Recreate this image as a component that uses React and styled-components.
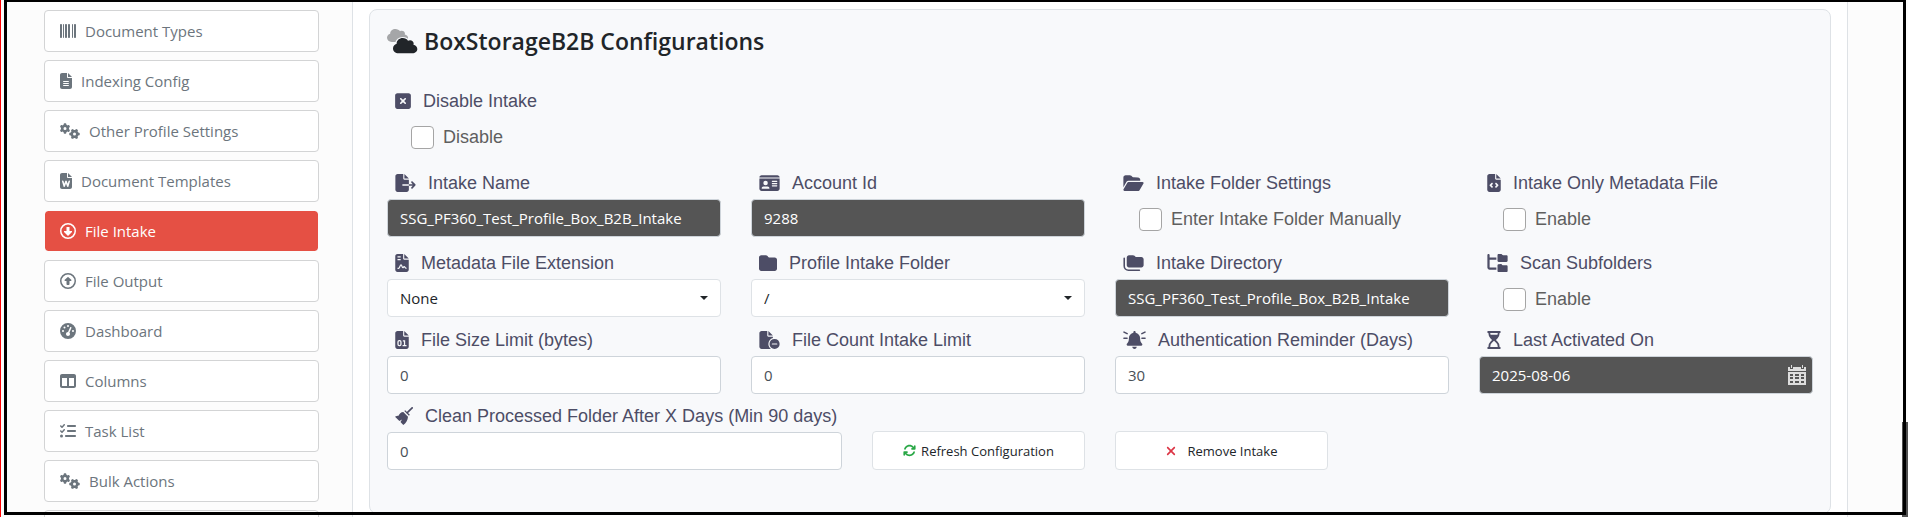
import styled, { createGlobalStyle } from 'styled-components';
import {
	FaBarcode,
	FaFileLines,
	FaGears,
	FaFileWord,
	FaRegCircleDown,
	FaRegCircleUp,
	FaGaugeHigh,
	FaTableColumns,
	FaListCheck,
	FaSquareXmark,
	FaFileExport,
	FaIdCard,
	FaFolderOpen,
	FaFileCode,
	FaFolder,
	FaFolderTree,
	FaFileCircleMinus,
	FaArrowsRotate,
	FaXmark,
} from 'react-icons/fa6';

const GlobalStyle = createGlobalStyle`
	* {
		box-sizing: border-box;
	}
	html,
	body,
	#root {
		height: 100%;
	}
	body {
		margin: 0;
		overflow: hidden;
		background-color: #fff;
		font-family: 'Open Sans', sans-serif;
		font-size: 15px;
		color: #212529;
	}
	input,
	select,
	button {
		font-family: inherit;
	}
`;

const Page = styled.div`
	position: relative;
	display: grid;
	grid-template-columns: 352px 1fr 61px;
	height: 100%;
	overflow: hidden;
	border-left: 1px solid #f00;
`;

const Frame = styled.div`
	position: absolute;
	inset: 0 2px 2px 3px;
	border: 3px solid #000;
	border-top-width: 2px;
	pointer-events: none;
`;

const ScrollThumb = styled.div`
	position: absolute;
	right: 0;
	bottom: 0;
	width: 6px;
	height: 95px;
	background-color: #505050;
`;

const IconSlot = styled.span`
	display: flex;
	flex: none;
	width: ${({ $width }) => $width}px;
	height: ${({ $height }) => $height}px;

	& > svg {
		width: 100%;
		height: 100%;
	}
`;

const Sidebar = styled.nav`
	display: flex;
	flex-direction: column;
	gap: 8px;
	padding: 10px 33px 0 43px;
	background-color: #fcfcfc;
	border-right: 1px solid #dee2e6;
`;

const NavButton = styled.button`
	display: flex;
	flex: none;
	align-items: center;
	gap: 9px;
	height: 42px;
	padding: 0 15px;
	font-size: 15px;
	color: ${({ $active }) => ($active ? '#fff' : '#6c757d')};
	background-color: ${({ $active }) => ($active ? '#e55044' : '#fff')};
	background-clip: padding-box;
	border: 1px solid ${({ $active }) => ($active ? '#fcfcfc' : '#d3d4d5')};
	border-radius: 4px;
`;

const Main = styled.main`
	padding: 9px 16px 0;
`;

const Aside = styled.aside`
	background-color: #fcfcfc;
	border-left: 1px solid #dee2e6;
`;

const Panel = styled.section`
	min-height: 505px;
	padding: 15px 17px;
	background-color: #f8f9fb;
	border: 1px solid #dee2e6;
	border-radius: 8px;
`;

const Title = styled.h1`
	display: flex;
	align-items: center;
	gap: 6px;
	height: 32px;
	margin: 0 0 26px;
	font-size: 23px;
	font-weight: 600;
`;

const Grid = styled.div`
	display: grid;
	grid-template-columns: repeat(4, 1fr);
	column-gap: 30px;
`;

const Field = styled.div`
	grid-column: span ${({ $span }) => $span || 1};
	height: ${({ $height }) => $height}px;
`;

const Label = styled.label`
	display: flex;
	align-items: center;
	gap: 12px;
	height: 34px;
	padding: 2px 0 0 8px;
	font-family: 'Liberation Sans', Arial, sans-serif;
	font-size: 18px;
	color: #4d4d66;
	white-space: nowrap;
`;

const TextInput = styled.input`
	display: block;
	width: 100%;
	height: 38px;
	padding: 0 12px;
	font-size: 15px;
	color: ${({ readOnly }) => (readOnly ? '#fff' : '#495057')};
	background-color: ${({ readOnly }) => (readOnly ? '#555' : '#fff')};
	border: 1px solid #ced4da;
	border-radius: 4px;
	outline: none;
`;

const SelectInput = styled.select`
	display: block;
	width: 100%;
	height: 38px;
	padding: 0 12px;
	font-size: 15px;
	color: #212529;
	appearance: none;
	background-color: #fff;
	border: 1px solid #dee2e6;
	border-radius: 4px;
`;

const InputBox = styled.div`
	position: relative;
`;

const Caret = styled.span`
	position: absolute;
	top: 17px;
	right: 13px;
	border: 4px solid transparent;
	border-top-color: #212529;
	border-bottom: 0;
	pointer-events: none;
`;

const CalendarMark = styled.span`
	position: absolute;
	top: 9px;
	right: 7px;
	height: 20px;
`;

const CheckLabel = styled.label`
	display: flex;
	align-items: center;
	gap: 9px;
	height: 41px;
	padding-left: 24px;
	font-family: 'Liberation Sans', Arial, sans-serif;
	font-size: 18px;
	color: #5f5f5f;
`;

const CheckInput = styled.input`
	width: 23px;
	height: 23px;
	margin: 0;
	appearance: none;
	background-color: #fff;
	border: 1px solid #a5a5a5;
	border-radius: 4px;
`;

const Actions = styled.div`
	display: grid;
	grid-template-columns: 455px 213px 213px;
	column-gap: 30px;
	align-items: end;
`;

const ActionButton = styled.button`
	display: flex;
	align-items: center;
	justify-content: center;
	gap: ${({ $gap }) => $gap}px;
	height: 39px;
	font-size: 13px;
	color: #212529;
	background-color: #fff;
	border: 1px solid #dee2e6;
	border-radius: 4px;

	& svg {
		color: ${({ $tone }) => $tone};
	}
`;

const CLOUD =
	'M0 336c0 79.5 64.5 144 144 144H512c70.7 0 128-57.3 128-128c0-61.9-44-113.6-102.4-125.4c4.1-10.7 6.4-22.4 6.4-34.6c0-53-43-96-96-96c-19.7 0-38.1 6-53.3 16.2C367 64.2 315.3 32 256 32C167.6 32 96 103.6 96 192c0 2.7 .1 5.4 .2 8.1C40.2 219.8 0 273.2 0 336z';

const FILE = 'M0 64C0 28.7 28.7 0 64 0H224V128c0 17.7 14.3 32 32 32H384V448c0 35.3-28.7 64-64 64H64c-35.3 0-64-28.7-64-64V64zM256 0L384 128H256V0z';

const CloudsIcon = () => (
	<svg viewBox='0 0 31 26' aria-hidden='true'>
		<path d={CLOUD} fill='#a5a6a8' transform='scale(.033 .029)' />
		<path d={CLOUD} fill='#212529' stroke='#f8f9fb' strokeWidth='70' paintOrder='stroke' transform='translate(6 9) scale(.038 .034)' />
	</svg>
);

const FileSignalIcon = () => (
	<svg viewBox='0 0 384 512' fill='currentColor' aria-hidden='true'>
		<path d={FILE} />
		<path d='M64 84h90M64 160h90M64 410h30c30 0 40-100 70-100s25 80 50 80 15-30 40-30 15 50 66 50' fill='none' stroke='#f8f9fb' strokeWidth='36' />
	</svg>
);

const FileBinaryIcon = () => (
	<svg viewBox='0 0 384 512' fill='currentColor' aria-hidden='true'>
		<path d={FILE} />
		<rect x='78' y='276' width='84' height='140' rx='36' fill='none' stroke='#f8f9fb' strokeWidth='36' />
		<path d='M216 282h48v136M208 418h112' fill='none' stroke='#f8f9fb' strokeWidth='36' />
	</svg>
);

const FoldersIcon = () => (
	<svg viewBox='0 0 576 512' fill='currentColor' aria-hidden='true'>
		<path d='M160 32h112c18 0 34 7 46 20l26 25c6 6 14 9 22 9h146c35 0 64 29 64 64v170c0 35-29 64-64 64H160c-35 0-64-29-64-64V96c0-35 29-64 64-64z' />
		<path d='M24 120v224c0 66 54 120 120 120h312' fill='none' stroke='currentColor' strokeWidth='44' strokeLinecap='round' />
	</svg>
);

const BellOnIcon = () => (
	<svg viewBox='0 0 640 512' fill='currentColor' aria-hidden='true'>
		<path d='M320 0c-18 0-32 14-32 32v19c-73 15-128 80-128 157v19c0 47-17 92-49 128l-7 8c-8 10-10 23-5 34s17 19 29 19h384c12 0 24-7 29-19s3-24-5-34l-7-8c-32-36-49-81-49-128v-19c0-77-55-142-128-157V32c0-18-14-32-32-32zM365 493c12-12 19-28 19-45H256c0 17 7 33 19 45s28 19 45 19 33-7 45-19z' />
		<path d='M22 32l88 44M20 208h88M618 32l-88 44M620 208h-88' stroke='currentColor' strokeWidth='44' strokeLinecap='round' />
	</svg>
);

const HourglassIcon = () => (
	<svg viewBox='0 0 384 512' fill='currentColor' aria-hidden='true'>
		<path d='M28 30h328M28 482h328' stroke='currentColor' strokeWidth='56' strokeLinecap='round' />
		<path
			d='M60 40v34c0 42 17 83 47 113l69 69-69 69c-30 30-47 71-47 113v34M324 40v34c0 42-17 83-47 113l-69 69 69 69c30 30 47 71 47 113v34'
			fill='none'
			stroke='currentColor'
			strokeWidth='52'
		/>
		<path d='M64 110h256c-8 30-22 55-43 77l-85 85-85-85c-21-22-35-47-43-77z' />
	</svg>
);

const BroomIcon = () => (
	<svg viewBox='0 0 512 512' fill='currentColor' aria-hidden='true'>
		<path d='M488 24L350 162' stroke='currentColor' strokeWidth='48' strokeLinecap='round' />
		<path d='M290 90l132 132-26 26-132-132zM236 142l134 134c-6 100-60 180-134 236L156 428l44-76-76 44L0 276c40-20 70-24 100-24 20-60 70-106 136-110z' />
	</svg>
);

const CalendarIcon = () => (
	<svg width='18' height='20' viewBox='0 0 18 20' fill='#ddd' aria-hidden='true'>
		<path d='M0 2h2v2h3V2h8v2h3V2h2v4H0zM3 0h1v3H3zM14 0h1v3h-1z' />
		<path fillRule='evenodd' d='M0 7h18v13H0zM2 9v2h3V9zM7 9v2h4V9zM13 9v2h3V9zM2 12v2h3v-2zM7 12v2h4v-2zM13 12v2h3v-2zM2 16v2h3v-2zM7 16v2h4v-2zM13 16v2h3v-2z' />
	</svg>
);

const navItems = [
	{ text: 'Document Types', Icon: FaBarcode },
	{ text: 'Indexing Config', Icon: FaFileLines, width: 12 },
	{ text: 'Other Profile Settings', Icon: FaGears, width: 20 },
	{ text: 'Document Templates', Icon: FaFileWord, width: 12 },
	{ text: 'File Intake', Icon: FaRegCircleDown, active: true },
	{ text: 'File Output', Icon: FaRegCircleUp },
	{ text: 'Dashboard', Icon: FaGaugeHigh },
	{ text: 'Columns', Icon: FaTableColumns },
	{ text: 'Task List', Icon: FaListCheck },
	{ text: 'Bulk Actions', Icon: FaGears, width: 20 },
	{ text: '' },
];

const FieldIcon = ({ Icon, width }) => (
	<IconSlot $width={width} $height={18}>
		<Icon />
	</IconSlot>
);

const TextField = ({ id, label, Icon, iconWidth, height, value, readOnly, calendar }) => (
	<Field $height={height}>
		<Label htmlFor={id}>
			<FieldIcon Icon={Icon} width={iconWidth} />
			{label}
		</Label>
		<InputBox>
			<TextInput id={id} type='text' defaultValue={value} readOnly={readOnly} />
			{calendar && (
				<CalendarMark>
					<CalendarIcon />
				</CalendarMark>
			)}
		</InputBox>
	</Field>
);

const SelectField = ({ id, label, Icon, iconWidth, height, value }) => (
	<Field $height={height}>
		<Label htmlFor={id}>
			<FieldIcon Icon={Icon} width={iconWidth} />
			{label}
		</Label>
		<InputBox>
			<SelectInput id={id} defaultValue={value}>
				<option>{value}</option>
			</SelectInput>
			<Caret />
		</InputBox>
	</Field>
);

const CheckField = ({ label, Icon, iconWidth, height, span, text }) => (
	<Field $height={height} $span={span}>
		<Label as='div'>
			<FieldIcon Icon={Icon} width={iconWidth} />
			{label}
		</Label>
		<CheckLabel>
			<CheckInput type='checkbox' />
			{text}
		</CheckLabel>
	</Field>
);

const App = () => {
	return (
		<>
			<GlobalStyle />
			<Page>
				<Sidebar>
					{navItems.map(({ text, Icon, width, active }) => (
						<NavButton key={text} type='button' $active={active}>
							{Icon && (
								<IconSlot $width={width || 16} $height={16}>
									<Icon />
								</IconSlot>
							)}
							{text}
						</NavButton>
					))}
				</Sidebar>

				<Main>
					<Panel>
						<Title>
							<IconSlot $width={31} $height={26}>
								<CloudsIcon />
							</IconSlot>
							BoxStorageB2B Configurations
						</Title>

						<Grid>
							<CheckField label='Disable Intake' Icon={FaSquareXmark} iconWidth={16} height={82} span={4} text='Disable' />

							<TextField id='intakeName' label='Intake Name' Icon={FaFileExport} iconWidth={21} height={80} value='SSG_PF360_Test_Profile_Box_B2B_Intake' readOnly />
							<TextField id='accountId' label='Account Id' Icon={FaIdCard} iconWidth={21} height={80} value='9288' readOnly />
							<CheckField label='Intake Folder Settings' Icon={FaFolderOpen} iconWidth={21} height={80} text='Enter Intake Folder Manually' />
							<CheckField label='Intake Only Metadata File' Icon={FaFileCode} iconWidth={14} height={80} text='Enable' />

							<SelectField id='metadataExt' label='Metadata File Extension' Icon={FileSignalIcon} iconWidth={14} height={77} value='None' />
							<SelectField id='intakeFolder' label='Profile Intake Folder' Icon={FaFolder} iconWidth={18} height={77} value='/' />
							<TextField id='intakeDir' label='Intake Directory' Icon={FoldersIcon} iconWidth={21} height={77} value='SSG_PF360_Test_Profile_Box_B2B_Intake' readOnly />
							<CheckField label='Scan Subfolders' Icon={FaFolderTree} iconWidth={21} height={77} text='Enable' />

							<TextField id='sizeLimit' label='File Size Limit (bytes)' Icon={FileBinaryIcon} iconWidth={14} height={76} value='0' />
							<TextField id='countLimit' label='File Count Intake Limit' Icon={FaFileCircleMinus} iconWidth={21} height={76} value='0' />
							<TextField id='authReminder' label='Authentication Reminder (Days)' Icon={BellOnIcon} iconWidth={23} height={76} value='30' />
							<TextField id='lastActivated' label='Last Activated On' Icon={HourglassIcon} iconWidth={14} height={76} value='2025-08-06' readOnly calendar />
						</Grid>

						<Actions>
							<TextField id='cleanDays' label='Clean Processed Folder After X Days (Min 90 days)' Icon={BroomIcon} iconWidth={18} height={72} value='0' />
							<ActionButton type='button' $gap={5} $tone='#28a745'>
								<IconSlot $width={13} $height={13}>
									<FaArrowsRotate />
								</IconSlot>
								Refresh Configuration
							</ActionButton>
							<ActionButton type='button' $gap={12} $tone='#dc3545'>
								<IconSlot $width={10} $height={14}>
									<FaXmark />
								</IconSlot>
								Remove Intake
							</ActionButton>
						</Actions>
					</Panel>
				</Main>

				<Aside />
				<ScrollThumb />
				<Frame />
			</Page>
		</>
	);
};

export default App;
